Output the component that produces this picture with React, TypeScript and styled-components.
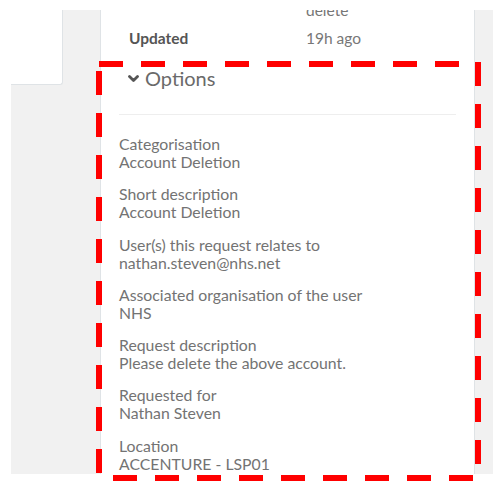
import React from 'react';
import styled, { createGlobalStyle } from 'styled-components';

const GlobalStyle = createGlobalStyle`
  body {
    margin: 0;
    background: #fff;
    font-family: Lato, 'Liberation Sans', sans-serif;
  }
`;

const Page = styled.div`
  position: relative;
  width: 500px;
  height: 497px;
  padding: 10px 0 0 11px;
  box-sizing: border-box;
`;

const Viewport = styled.div`
  display: flex;
  align-items: flex-start;
  width: 482px;
  height: 464px;
  background: #f1f1f1;
  overflow: hidden;
`;

const SideCard = styled.div`
  flex: none;
  width: 51px;
  height: 74px;
  background: #fff;
  border-right: 1px solid #dfe3e6;
  border-bottom: 1px solid #dfe3e6;
  border-bottom-right-radius: 3px;
`;

const DetailCard = styled.div`
  flex: none;
  margin: -10px 0 0 37px;
  width: 373px;
  min-height: 500px;
  background: #fff;
  border-left: 1px solid #dfe3e6;
  border-right: 1px solid #dfe3e6;
`;

const Summary = styled.div`
  display: grid;
  grid-template-columns: 177px 1fr;
  row-gap: 8px;
  padding: 0 0 0 28px;
  font-size: 15.5px;
  line-height: 20px;
  color: #777;
`;

const SummaryLabel = styled.div`
  font-weight: 700;
  color: #555;
`;

const OptionsToggle = styled.div`
  display: flex;
  align-items: center;
  gap: 6px;
  margin: 17px 0 0 27px;
  font-size: 20px;
  line-height: 26px;
  color: #6a6a6a;
`;

const Chevron = styled.svg`
  width: 11px;
  height: 8px;
  margin-top: 1px;
`;

const Divider = styled.hr`
  margin: 23px 18px 0 18px;
  border: none;
  border-top: 1px solid #eee;
`;

const Fields = styled.dl`
  display: flex;
  flex-direction: column;
  gap: 14.3px;
  margin: 20px 0 0;
  padding: 0 18px;
  font-size: 15.8px;
  line-height: 18px;
  color: #737373;
`;

const Field = styled.div`
  display: flex;
  flex-direction: column;
`;

const FieldLabel = styled.dt`
  margin: 0;
`;

const FieldValue = styled.dd`
  margin: 0;
`;

const Highlight = styled.svg`
  position: absolute;
  left: 0;
  top: 0;
  pointer-events: none;
`;

const fields = [
  ['Categorisation', 'Account Deletion'],
  ['Short description', 'Account Deletion'],
  ['User(s) this request relates to', 'nathan.steven@nhs.net'],
  ['Associated organisation of the user', 'NHS'],
  ['Request description', 'Please delete the above account.'],
  ['Requested for', 'Nathan Steven'],
  ['Location', 'ACCENTURE - LSP01'],
];

const dashes = (from: number, count: number) =>
  Array.from({ length: count }, (_, i) => from + i * 42);

export default function App() {
  return (
    <>
      <GlobalStyle />
      <Page>
        <Viewport>
          <SideCard />
          <DetailCard>
            <Summary>
              <SummaryLabel />
              <div>delete</div>
              <SummaryLabel>Updated</SummaryLabel>
              <div>19h ago</div>
            </Summary>
            <OptionsToggle>
              <Chevron viewBox="0 0 11 8">
                <polyline
                  points="1.5,1.5 5.5,5.5 9.5,1.5"
                  fill="none"
                  stroke="#555"
                  strokeWidth="2.8"
                  strokeLinecap="round"
                  strokeLinejoin="round"
                />
              </Chevron>
              <span>Options</span>
            </OptionsToggle>
            <Divider />
            <Fields>
              {fields.map(([label, value]) => (
                <Field key={label}>
                  <FieldLabel>{label}</FieldLabel>
                  <FieldValue>{value}</FieldValue>
                </Field>
              ))}
            </Fields>
          </DetailCard>
        </Viewport>
        <Highlight width="500" height="497">
          <g fill="#ff0000">
            {dashes(99, 9).map(x => <rect key={'t' + x} x={x} y={61} width={24} height={6} />)}
            {dashes(113, 9).map(x => <rect key={'b' + x} x={x} y={475} width={24} height={6} />)}
            {dashes(71, 10).map(y => <rect key={'l' + y} x={96} y={y} width={6} height={24} />)}
            {dashes(62, 10).map(y => <rect key={'r' + y} x={475} y={y} width={6} height={24} />)}
          </g>
        </Highlight>
      </Page>
    </>
  );
}
